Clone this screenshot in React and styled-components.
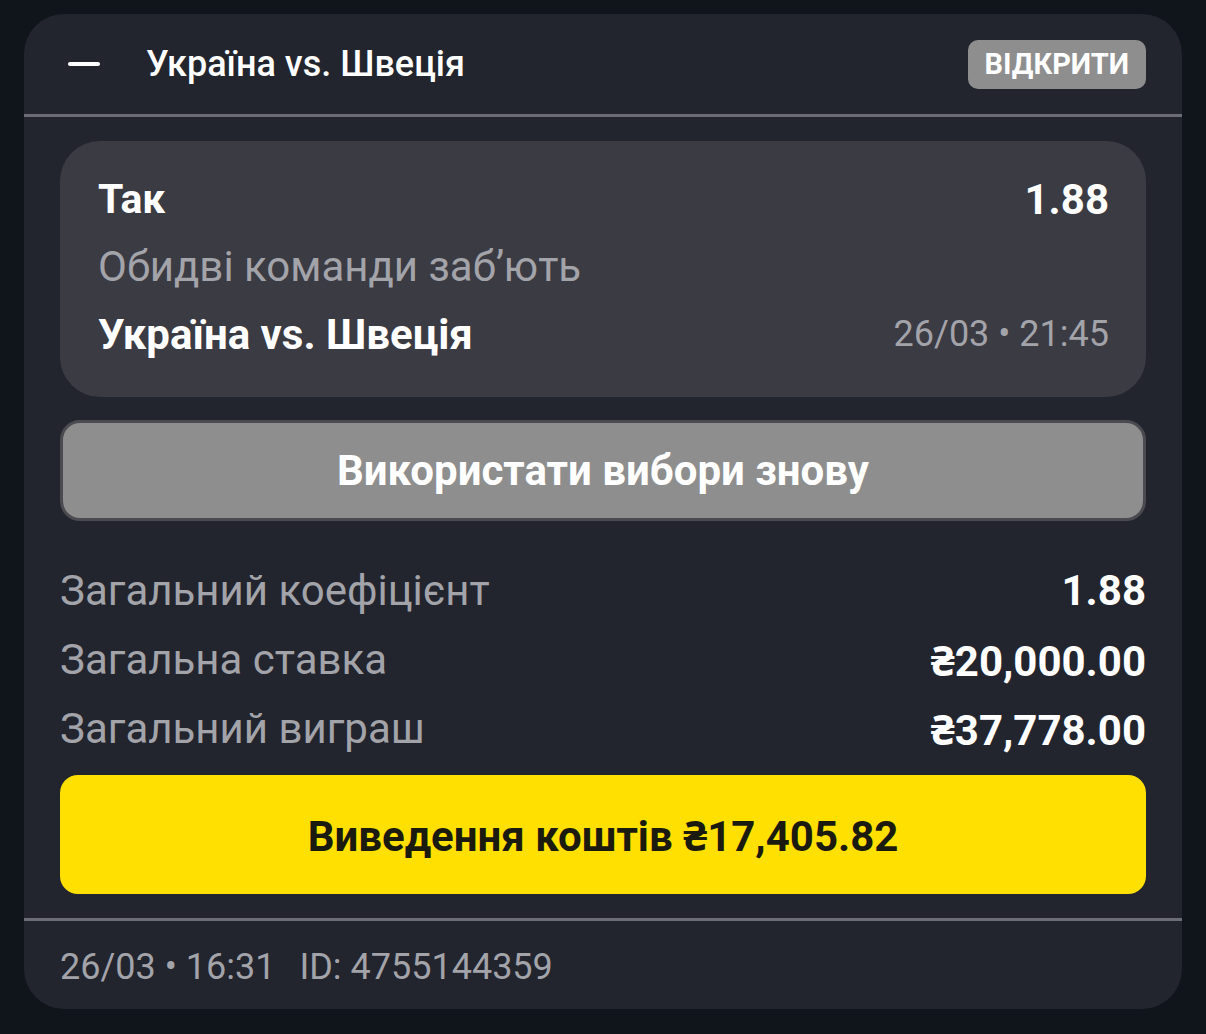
import React from "react";
import styled, { createGlobalStyle } from "styled-components";

const GlobalStyle = createGlobalStyle`
  html, body {
    margin: 0;
    padding: 0;
    background: #10141b;
    font-family: Roboto, "Noto Sans", sans-serif;
  }
`;

const Page = styled.div`
  padding: 14px 24px 24px;
`;

const Card = styled.div`
  background: #22252e;
  border-radius: 40px;
  overflow: hidden;
`;

const Header = styled.div`
  display: flex;
  align-items: center;
  height: 100px;
  padding: 0 36px 0 44px;
  border-bottom: 3px solid #6b6c74;
`;

const Minus = styled.span`
  display: block;
  width: 32px;
  height: 4px;
  border-radius: 2px;
  background: #ffffff;
  margin-right: 46px;
`;

const HeaderTitle = styled.div`
  flex: 1;
  color: #ffffff;
  font-size: 36px;
  font-weight: 500;
`;

const OpenBadge = styled.div`
  background: #8e8e8e;
  color: #ffffff;
  font-weight: 700;
  font-size: 29px;
  border-radius: 10px;
  height: 49px;
  padding: 0 17px;
  display: flex;
  align-items: center;
`;

const Body = styled.div`
  padding: 24px 36px 24px;
  display: flex;
  flex-direction: column;
`;

const Selection = styled.div`
  background: #3b3b43;
  border-radius: 40px;
  padding: 30px 37px 34px 38px;
  display: flex;
  flex-direction: column;
  gap: 10px;
`;

const Row = styled.div`
  display: flex;
  justify-content: space-between;
  align-items: center;
  height: ${(p) => p.h || 59}px;
`;

const Strong = styled.span`
  color: #ffffff;
  font-weight: 700;
  font-size: ${(p) => p.size || 42}px;
`;

const Muted = styled.span`
  color: #a3a3aa;
  font-size: ${(p) => p.size || 42}px;
`;

const ReuseButton = styled.button`
  margin-top: 23px;
  height: 101px;
  border: 3px solid #4a4a50;
  border-radius: 20px;
  background: #8e8e8e;
  color: #ffffff;
  font-family: inherit;
  font-weight: 700;
  font-size: 42px;
`;

const Summary = styled.div`
  margin-top: 40px;
  display: flex;
  flex-direction: column;
  gap: 10px;
`;

const CashoutButton = styled.button`
  margin-top: 17px;
  height: 119px;
  border: none;
  border-radius: 18px;
  background: #ffe000;
  color: #1b1a0e;
  font-family: inherit;
  font-weight: 700;
  font-size: 42px;
`;

const Footer = styled.div`
  border-top: 3px solid #6b6c74;
  height: 84px;
  padding: 4px 36px 0;
  display: flex;
  align-items: center;
  gap: 24px;
  color: #a3a3aa;
  font-size: 36px;
`;

const summary = [
  ["Загальний коефіцієнт", "1.88"],
  ["Загальна ставка", "₴20,000.00"],
  ["Загальний виграш", "₴37,778.00"],
];

export default function App() {
  return (
    <>
      <GlobalStyle />
      <Page>
        <Card>
          <Header>
            <Minus />
            <HeaderTitle>Україна vs. Швеція</HeaderTitle>
            <OpenBadge>ВІДКРИТИ</OpenBadge>
          </Header>
          <Body>
            <Selection>
              <Row h={56}>
                <Strong size={41}>Так</Strong>
                <Strong>1.88</Strong>
              </Row>
              <Row h={58}>
                <Muted>Обидві команди заб’ють</Muted>
              </Row>
              <Row h={58}>
                <Strong>Україна vs. Швеція</Strong>
                <Muted size={36}>26/03 • 21:45</Muted>
              </Row>
            </Selection>
            <ReuseButton>Використати вибори знову</ReuseButton>
            <Summary>
              {summary.map(([label, value]) => (
                <Row key={label}>
                  <Muted>{label}</Muted>
                  <Strong>{value}</Strong>
                </Row>
              ))}
            </Summary>
            <CashoutButton>Виведення коштів ₴17,405.82</CashoutButton>
          </Body>
          <Footer>
            <span>26/03 • 16:31</span>
            <span>ID: 4755144359</span>
          </Footer>
        </Card>
      </Page>
    </>
  );
}
